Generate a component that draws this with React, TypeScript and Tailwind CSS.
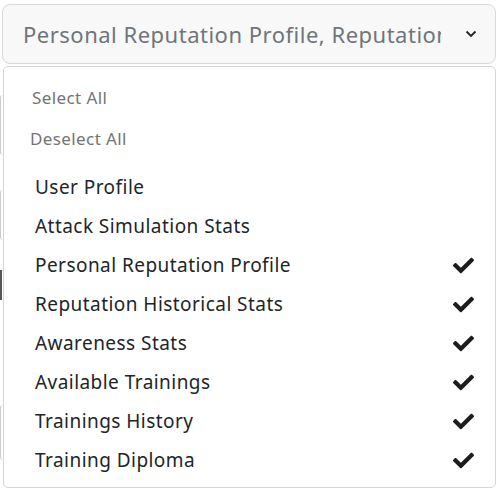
import React from "react";
import { FaCheck } from "react-icons/fa";

const items = [
  { label: "User Profile", checked: false },
  { label: "Attack Simulation Stats", checked: false },
  { label: "Personal Reputation Profile", checked: true },
  { label: "Reputation Historical Stats", checked: true },
  { label: "Awareness Stats", checked: true },
  { label: "Available Trainings", checked: true },
  { label: "Trainings History", checked: true },
  { label: "Training Diploma", checked: true },
];

export default function App() {
  return (
    <div
      className="relative w-[498px] h-[489px] bg-white overflow-hidden"
      style={{ fontFamily: '"Noto Sans", "Open Sans", sans-serif' }}
    >
      <div className="pt-[4px] pl-[2px] pr-[2px]">
        <button className="w-full h-[60px] flex items-center justify-between rounded-[8px] border border-[#d9d9d9] bg-[#f8f8f8] pl-[20px] pr-[15px]">
          <span className="text-[22px] tracking-[0.5px] text-[#6f757a] whitespace-nowrap overflow-hidden w-[418px] text-left">
            Personal Reputation Profile, Reputation Historical Stats
          </span>
          <svg width="12" height="8" viewBox="0 0 12 8" className="mr-[3px]">
            <path d="M1.5 1.5 L6 6 L10.5 1.5" stroke="#222" strokeWidth="1.8" fill="none" />
          </svg>
        </button>
      </div>

      {/* faint underlying content edges */}
      <div className="absolute left-0 top-[95px] w-[3px] h-[60px] border-l border-[#ccc] rounded-l-[4px]" />
      <div className="absolute left-0 top-[190px] w-[3px] h-[50px] border-l border-[#ccc] rounded-l-[4px]" />
      <div className="absolute left-0 top-[270px] w-[3px] h-[30px] border-l-2 border-[#555]" />
      <div className="absolute left-0 top-[405px] w-[3px] h-[55px] border-l border-[#ccc] rounded-l-[4px]" />

      <div className="absolute left-[3px] top-[66px] w-[493px] h-[422px] rounded-[5px] border border-[#d6d6d6] bg-white">
        <div className="pt-[20px] flex flex-col">
          <div className="pl-[28px] h-[22px] flex items-center text-[17px] tracking-[0.4px] text-[#747474]">Select All</div>
          <div className="pl-[26px] mt-[19px] h-[22px] flex items-center text-[17px] tracking-[0.4px] text-[#747474]">Deselect All</div>
          <div className="mt-[18px] flex flex-col">
            {items.map((it) => (
              <div key={it.label} className="h-[39px] flex items-center justify-between pl-[31px] pr-[21px]">
                <span className="text-[19px] tracking-[0.45px] text-[#212529]">{it.label}</span>
                {it.checked && <FaCheck className="text-[#1c1c1c] w-[21px] h-[21px]" />}
              </div>
            ))}
          </div>
        </div>
      </div>
    </div>
  );
}
